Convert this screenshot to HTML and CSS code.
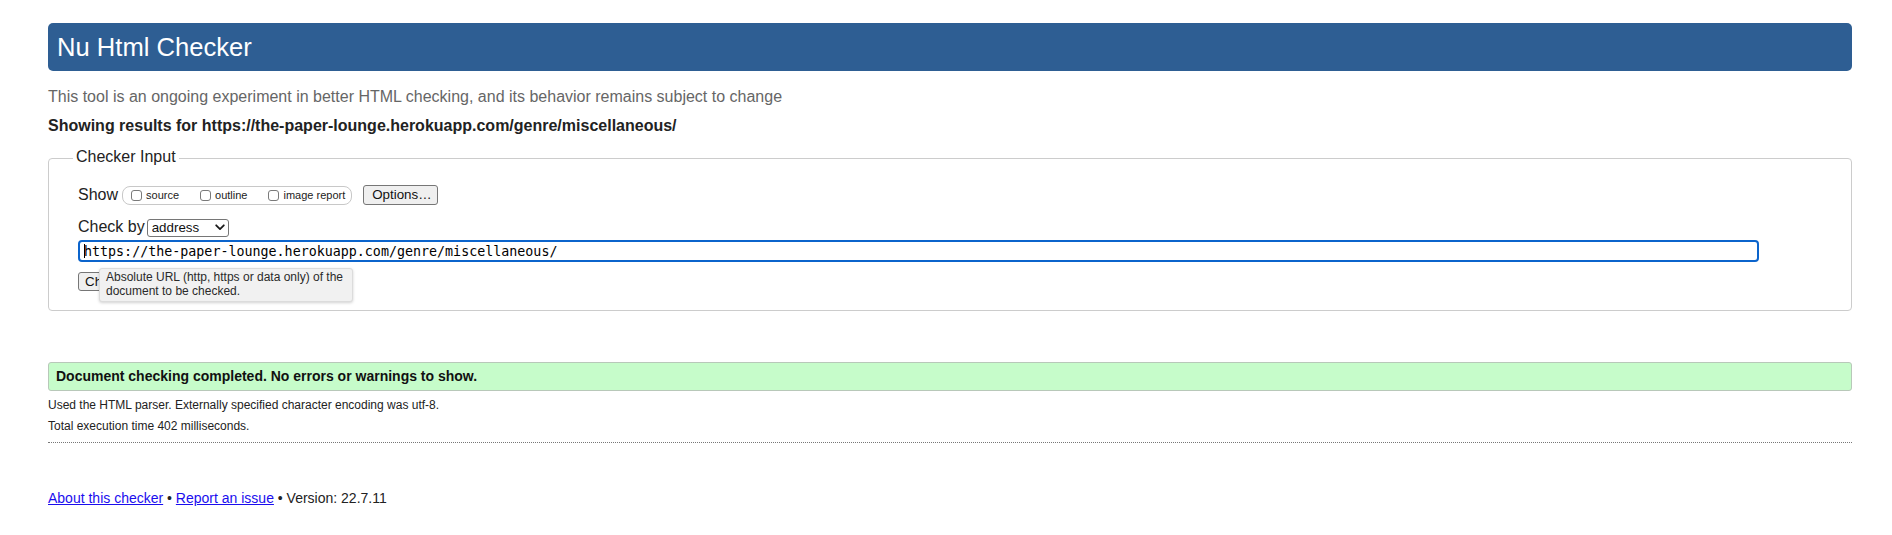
FILE: index.html
```html
<!DOCTYPE html>
<html lang="en">
<head>
<meta charset="utf-8">
<title>Showing results for https://the-paper-lounge.herokuapp.com/genre/miscellaneous/ - Nu Html Checker</title>
<link rel="stylesheet" href="styles.css">
</head>
<body>
<h1 class="title">Nu Html Checker</h1>
<p class="intro">This tool is an ongoing experiment in better HTML checking, and its behavior remains subject to change</p>
<p class="showing">Showing results for https://the-paper-lounge.herokuapp.com/genre/miscellaneous/</p>
<form class="checker" onsubmit="return false">
  <fieldset class="input-set">
    <legend class="legend">Checker Input</legend>
    <div class="fs-body">
      <div class="row row-show">
        <span class="label">Show</span>
        <span class="group">
          <label class="opt"><input type="checkbox" class="cb"><span>source</span></label>
          <label class="opt"><input type="checkbox" class="cb"><span>outline</span></label>
          <label class="opt"><input type="checkbox" class="cb"><span>image report</span></label>
        </span>
        <button type="button" class="btn btn-options">Options…</button>
      </div>
      <div class="row row-by">
        <span class="label">Check by</span>
        <span class="select-wrap">
          <select class="select"><option>address</option><option>file upload</option><option>text input</option></select>
          <svg class="chev" width="10" height="7" viewBox="0 0 10 7" aria-hidden="true"><path d="M1.2 1.3 L5 5.1 L8.8 1.3" fill="none" stroke="#1a1a1a" stroke-width="1.8" stroke-linecap="round" stroke-linejoin="round"/></svg>
        </span>
      </div>
      <div class="row row-url">
        <input class="url" type="url" value="https://the-paper-lounge.herokuapp.com/genre/miscellaneous/">
        <span class="caret"></span>
      </div>
      <div class="row row-submit">
        <button type="submit" class="btn btn-check">Check</button>
        <div class="tooltip">Absolute URL (http, https or data only) of the<br>document to be checked.</div>
      </div>
    </div>
  </fieldset>
</form>
<p class="success">Document checking completed. No errors or warnings to show.</p>
<p class="detail detail-first">Used the HTML parser. Externally specified character encoding was utf-8.</p>
<p class="detail detail-second">Total execution time 402 milliseconds.</p>
<hr class="sep">
<p class="footer"><a href="#about" class="link">About this checker</a> • <a href="#issue" class="link">Report an issue</a> • Version: 22.7.11</p>
</body>
</html>
```

FILE: styles.css
```css
html {
  background: #fff;
}

body {
  margin: 0;
  padding: 0 40px 0 48px;
  font-family: "Liberation Sans", Arial, Helvetica, sans-serif;
  font-size: 16px;
  color: #222;
}

.title {
  margin: 23px 0 0;
  height: 48px;
  box-sizing: border-box;
  padding: 9px 9px;
  line-height: 30px;
  font-size: 25.6px;
  font-weight: normal;
  color: #fff;
  background: #2e5e93;
  border-radius: 5px;
}

.intro {
  margin: 16px 0 0;
  line-height: 20px;
  color: #666;
}

.showing {
  margin: 9px 0 0;
  line-height: 20px;
  font-weight: bold;
}

.checker {
  margin: 11px 0 0;
}

.input-set {
  margin: 0;
  padding: 0 0 19px 24px;
  border: 1px solid #ccc;
  border-radius: 4px;
  min-width: 0;
}

.legend {
  padding: 0 3px 3px;
  line-height: 20px;
  font-size: 16px;
}

.fs-body {
  padding-left: 5px;
}

.row {
  display: flex;
  align-items: center;
}

.label {
  line-height: 20px;
}

.row-show {
  margin-top: 15px;
  height: 20px;
}

.group {
  display: inline-flex;
  align-items: center;
  height: 19px;
  box-sizing: border-box;
  margin-left: 4px;
  padding: 0 6px 0 8px;
  border: 1px solid #c8c8c8;
  border-radius: 8px;
}

.opt {
  display: inline-flex;
  align-items: center;
  font-size: 11px;
  line-height: 13px;
  color: #222;
}

.opt + .opt {
  margin-left: 21px;
}

.cb {
  appearance: none;
  -webkit-appearance: none;
  width: 11px;
  height: 11px;
  margin: 0 4px 0 0;
  border: 1px solid #7a7a7a;
  border-radius: 3px;
  background: #fff;
  box-sizing: border-box;
}

.btn {
  height: 20px;
  box-sizing: border-box;
  margin: 0;
  padding: 0 8px;
  font-family: "Liberation Sans", Arial, Helvetica, sans-serif;
  font-size: 13.33px;
  line-height: 16px;
  color: #111;
  background: #efefef;
  border: 1px solid #767676;
  border-radius: 3px;
}

.btn-options {
  margin-left: 11px;
  width: 75px;
}

.row-by {
  margin-top: 13px;
  height: 18px;
}

.select-wrap {
  position: relative;
  display: inline-block;
  margin-left: 2px;
  height: 18px;
}

.select {
  appearance: none;
  -webkit-appearance: none;
  width: 82px;
  height: 18px;
  box-sizing: border-box;
  margin: 0;
  padding: 0 0 0 4px;
  font-family: "Liberation Sans", Arial, Helvetica, sans-serif;
  font-size: 13.33px;
  line-height: 16px;
  color: #111;
  background: #fff;
  border: 1px solid #767676;
  border-radius: 3px;
}

.chev {
  position: absolute;
  right: 4px;
  top: 6px;
  pointer-events: none;
}

.row-url {
  position: relative;
  margin-top: 4px;
  height: 22px;
}

.url {
  width: 1681px;
  height: 22px;
  box-sizing: border-box;
  margin: 0;
  padding: 0 4px;
  font-family: "DejaVu Sans Mono", "Liberation Mono", monospace;
  font-size: 13.33px;
  color: #000;
  background: #fff;
  border: 2px solid #0b64cc;
  border-radius: 4px;
  outline: none;
}

.caret {
  position: absolute;
  left: 6px;
  top: 4px;
  width: 1px;
  height: 14px;
  background: #000;
}

.row-submit {
  position: relative;
  margin-top: 10px;
  height: 19px;
}

.btn-check {
  height: 19px;
  padding: 0 6px;
}

.tooltip {
  position: absolute;
  left: 21px;
  top: -4px;
  width: 254px;
  height: 34px;
  box-sizing: border-box;
  padding: 1px 6px 3px;
  font-size: 12px;
  line-height: 14px;
  color: #2a2a2a;
  background: #f1f1f1;
  border: 1px solid #dcdcdc;
  border-radius: 3px;
  box-shadow: 0 1px 3px rgba(0, 0, 0, 0.18);
}

.success {
  margin: 51px 0 0;
  padding: 0 7px;
  line-height: 27px;
  font-size: 14px;
  font-weight: bold;
  color: #111;
  background: #c6fcca;
  border: 1px solid #b8c8b9;
  border-radius: 3px;
}

.detail {
  margin: 0;
  font-size: 12px;
  line-height: 14px;
  color: #222;
}

.detail-first {
  margin-top: 7px;
}

.detail-second {
  margin-top: 7px;
}

.sep {
  margin: 9px 0 0;
  height: 0;
  border: 0;
  border-top: 1px dotted #777;
}

.footer {
  margin: 47px 0 0;
  font-size: 14px;
  line-height: 17px;
  color: #222;
}

.link {
  color: #1a0dee;
  text-decoration: underline;
}
```
